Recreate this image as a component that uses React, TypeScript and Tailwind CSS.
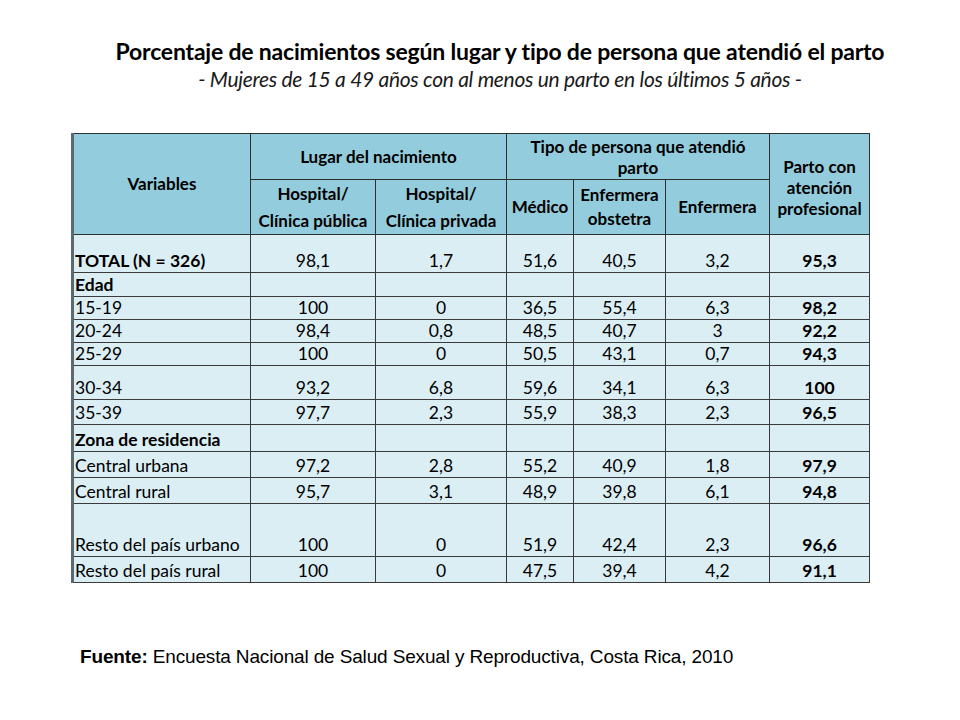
const rows: { label: string; vals: string[]; bold?: boolean; h: string }[] = [
  { label: "TOTAL (N = 326)", vals: ["98,1", "1,7", "51,6", "40,5", "3,2", "95,3"], bold: true, h: "h-[38px]" },
  { label: "Edad", vals: ["", "", "", "", "", ""], bold: true, h: "h-[24px]" },
  { label: "15-19", vals: ["100", "0", "36,5", "55,4", "6,3", "98,2"], h: "h-[23px]" },
  { label: "20-24", vals: ["98,4", "0,8", "48,5", "40,7", "3", "92,2"], h: "h-[23px]" },
  { label: "25-29", vals: ["100", "0", "50,5", "43,1", "0,7", "94,3"], h: "h-[23px]" },
  { label: "30-34", vals: ["93,2", "6,8", "59,6", "34,1", "6,3", "100"], h: "h-[34px]" },
  { label: "35-39", vals: ["97,7", "2,3", "55,9", "38,3", "2,3", "96,5"], h: "h-[25px]" },
  { label: "Zona de residencia", vals: ["", "", "", "", "", ""], bold: true, h: "h-[27px]" },
  { label: "Central urbana", vals: ["97,2", "2,8", "55,2", "40,9", "1,8", "97,9"], h: "h-[26px]" },
  { label: "Central rural", vals: ["95,7", "3,1", "48,9", "39,8", "6,1", "94,8"], h: "h-[26px]" },
  { label: "Resto del país urbano", vals: ["100", "0", "51,9", "42,4", "2,3", "96,6"], h: "h-[53px]" },
  { label: "Resto del país rural", vals: ["100", "0", "47,5", "39,4", "4,2", "91,1"], h: "h-[26px]" },
];

const hd = "border border-[#2f2f2f] bg-[#93cddd] text-center align-middle font-bold text-[17px] text-black";
const td = "border border-[#3a3a3a] bg-[#dbeef4] align-bottom text-[17.5px] leading-[22px] text-black";

export default function App() {
  return (
    <div className="w-[960px] h-[720px] bg-white" style={{ fontFamily: "Lato, 'Noto Sans', sans-serif" }}>
      <div className="pl-[40px] pt-[38px] text-center text-black">
        <h1 className="text-[23px] font-bold leading-[27px] tracking-[-0.2px]">
          Porcentaje de nacimientos según lugar y tipo de persona que atendió el parto
        </h1>
        <p className="text-[21px] italic leading-[27px] tracking-[-0.3px] text-[#1a1a1a]">
          - Mujeres de 15 a 49 años con al menos un parto en los últimos 5 años -
        </p>
      </div>

      <div className="ml-[71px] mt-[41px]">
        <table className="table-fixed border-collapse w-[797px] border-l-[3px] border-l-[#5a6a70]">
          <colgroup>
            <col className="w-[178px]" />
            <col className="w-[125px]" />
            <col className="w-[131px]" />
            <col className="w-[67px]" />
            <col className="w-[92px]" />
            <col className="w-[104px]" />
            <col className="w-[100px]" />
          </colgroup>
          <thead>
            <tr className="h-[46px]">
              <th rowSpan={2} className={hd}>Variables</th>
              <th colSpan={2} className={`${hd} leading-[20px]`}>Lugar del nacimiento</th>
              <th colSpan={3} className={`${hd} leading-[21px]`}>
                Tipo de persona que atendió
                <br />
                parto
              </th>
              <th rowSpan={2} className={`${hd} leading-[21px] pt-[6px]`}>
                Parto con
                <br />
                atención
                <br />
                profesional
              </th>
            </tr>
            <tr className="h-[53px]">
              <th className={`${hd} text-[15.5px] leading-[27px]`}>
                Hospital/
                <br />
                Clínica pública
              </th>
              <th className={`${hd} text-[15.5px] leading-[27px]`}>
                Hospital/
                <br />
                Clínica privada
              </th>
              <th className={hd}>Médico</th>
              <th className={`${hd} leading-[24px]`}>
                Enfermera
                <br />
                obstetra
              </th>
              <th className={hd}>Enfermera</th>
            </tr>
          </thead>
          <tbody>
            {rows.map((r) => (
              <tr key={r.label} className={r.h}>
                <td className={`${td} pl-[1px] whitespace-nowrap ${r.bold ? "font-bold" : ""}`}>{r.label}</td>
                {r.vals.map((v, i) => (
                  <td key={i} className={`${td} text-center ${i === 5 ? "font-bold" : ""}`}>
                    {v}
                  </td>
                ))}
              </tr>
            ))}
          </tbody>
        </table>
      </div>

      <p
        className="ml-[80px] mt-[63px] text-[19px] leading-[22px] tracking-[-0.15px] text-black"
        style={{ fontFamily: "'Liberation Sans', Arial, sans-serif" }}
      >
        <span className="font-bold">Fuente:</span> Encuesta Nacional de Salud Sexual y Reproductiva, Costa Rica, 2010
      </p>
    </div>
  );
}
